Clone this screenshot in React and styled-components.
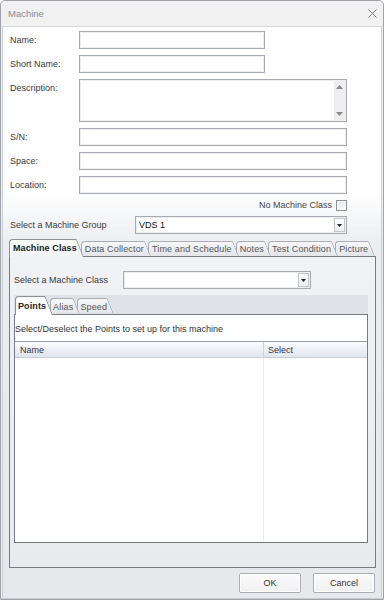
import React from 'react';
import styled, { createGlobalStyle } from 'styled-components';

const Global = createGlobalStyle`
  html, body { margin: 0; padding: 0; background: #fff; }
  * { box-sizing: border-box; }
`;

const FONT = '"Liberation Sans", Arial, sans-serif';

const Window = styled.div`
  width: 384px;
  height: 600px;
  border: 1px solid #9ea2a8;
  border-radius: 5px 5px 0 0;
  display: flex;
  flex-direction: column;
  overflow: hidden;
  background: #f1f1f1;
  font-family: ${FONT};
  font-size: 9px;
  color: #333;
`;

const TitleBar = styled.div`
  height: 25px;
  flex: none;
  display: flex;
  align-items: center;
  justify-content: space-between;
  padding: 0 6px 0 7px;
  color: #8c8c8c;
  font-size: 9.5px;
`;

const Body = styled.div`
  flex: 1;
  display: flex;
  flex-direction: column;
  margin: 0 1px;
  border: 1px solid #c9ccd1;
  border-top-color: #d6d8db;
  padding: 4px 5px 5px 6px;
  background: linear-gradient(to bottom, #ffffff 0px, #ffffff 165px, #eceef1 215px, #e6e8ec 100%);
`;

const FormGrid = styled.div`
  display: grid;
  grid-template-columns: 70px 1fr;
  row-gap: 6px;
`;

const Label = styled.div`
  display: flex;
  align-items: ${p => (p.$top ? 'flex-start' : 'center')};
  padding-top: ${p => (p.$top ? 4 : 0)}px;
  padding-left: 1px;
  color: #3a3a3a;
  white-space: nowrap;
`;

const Field = styled.div`
  width: ${p => p.$w}px;
  height: ${p => p.$h || 18}px;
  border: 1px solid #a7aab0;
  box-shadow: inset 0 0 0 1px #eceef1;
  background: #fff;
  display: flex;
  align-items: center;
  justify-content: space-between;
  padding-left: 3px;
  color: #111;
`;

const TextArea = styled(Field)`
  align-items: stretch;
  padding: 1px;
`;

const ScrollBar = styled.div`
  width: 11px;
  background: #eeeeee;
  display: flex;
  flex-direction: column;
  justify-content: space-between;
  align-items: center;
  padding: 4px 0;
`;

const RightRow = styled.div`
  grid-column: 2;
  width: 268px;
  height: 10px;
  display: flex;
  justify-content: flex-end;
  align-items: center;
  gap: 4px;
  color: #444;
`;

const CheckBox = styled.div`
  width: 11px;
  height: 11px;
  border: 1px solid #8e9196;
  background: linear-gradient(#e9eaec, #f9f9fa);
  box-shadow: inset 0 0 0 1px #fafafa;
`;

const SelectRow = styled.div`
  display: flex;
  align-items: center;
  margin-top: ${p => p.$mt || 0}px;
`;

const SelectLabel = styled.div`
  width: ${p => p.$w}px;
  padding-left: ${p => p.$pl || 0}px;
  color: #3a3a3a;
  white-space: nowrap;
`;

const DropBtn = styled.div`
  width: 11px;
  height: 14px;
  margin-right: 1px;
  border: 1px solid #c3c6cb;
  background: linear-gradient(#fdfdfd, #eceef0);
  display: flex;
  align-items: center;
  justify-content: center;
`;

const TabStrip = styled.div`
  display: flex;
  align-items: flex-end;
  height: ${p => p.$h}px;
  margin-top: ${p => p.$mt || 0}px;
  margin-bottom: -1px;
  padding-left: ${p => p.$pl || 0}px;
  position: relative;
  z-index: 2;
  flex: none;
  background: ${p => (p.$bg ? `linear-gradient(${p.$bg}, ${p.$bg})` : 'none')};
  background-size: 100% calc(100% - 1px);
  background-repeat: no-repeat;
`;

const Tab = styled.div`
  position: relative;
  z-index: ${p => (p.$active ? 50 : p.$z)};
  display: flex;
  align-items: center;
  height: ${p => (p.$active ? p.$h : p.$h - 3)}px;
  margin-bottom: ${p => (p.$active ? 0 : 1)}px;
  margin-right: -3px;
  padding: ${p => (p.$active ? 0 : 1)}px ${p => p.$pr}px 0 ${p => p.$pl}px;
  white-space: nowrap;
  font-weight: ${p => (p.$active ? 700 : 400)};
  color: ${p => (p.$active ? '#222' : '#555')};
  letter-spacing: ${p => (p.$active ? '0.1px' : '0.15px')};

  &::before,
  &::after {
    content: '';
    position: absolute;
    top: 0;
    bottom: 0;
    z-index: -1;
    border-style: solid;
    border-color: ${p => (p.$active ? '#8a8f96' : '#a9adb4')};
    background: ${p =>
      p.$active
        ? `linear-gradient(#fdfdfd, ${p.$base})`
        : 'linear-gradient(#f7f7f8, #e3e5e9)'};
  }
  &::before {
    left: 0;
    right: 8px;
    border-width: 1px 0 0 1px;
    border-radius: 4px 0 0 0;
  }
  &::after {
    right: 0;
    width: 14px;
    border-width: 1px 1px 0 0;
    border-radius: 0 2px 0 0;
    transform: skewX(22deg);
    transform-origin: 100% 100%;
  }
`;

const Panel = styled.div`
  flex: 1;
  display: flex;
  flex-direction: column;
  border: 1px solid #767b83;
  background: linear-gradient(#f1f2f5, #e8eaee);
  padding: 14px 7px 24px 4px;
  position: relative;
  z-index: 1;
`;

const InnerPanel = styled.div`
  flex: 1;
  display: flex;
  flex-direction: column;
  border: 1px solid #767b83;
  background: #fff;
  position: relative;
  z-index: 1;
`;

const Hint = styled.div`
  height: 26px;
  display: flex;
  align-items: center;
  padding-top: 1px;
  color: #333;
  white-space: nowrap;
`;

const GridHeader = styled.div`
  display: grid;
  grid-template-columns: 248px 1fr;
  height: 17px;
  border-top: 1px solid #9a9ea5;
  border-bottom: 1px solid #c9ced6;
  background: linear-gradient(#fbfcfd, #dfe5ee);
  color: #33334a;
`;

const HeadCell = styled.div`
  display: flex;
  align-items: center;
  padding-left: ${p => p.$pl}px;
  border-left: ${p => (p.$divider ? '1px solid #cfd3da' : 'none')};
`;

const GridBody = styled.div`
  flex: 1;
  display: grid;
  grid-template-columns: 248px 1fr;
`;

const BodyCell = styled.div`
  border-left: ${p => (p.$divider ? '1px solid #ececec' : 'none')};
`;

const ButtonRow = styled.div`
  display: flex;
  justify-content: flex-end;
  gap: 12px;
  margin-top: 5px;
  padding-right: 1px;
  flex: none;
`;

const Button = styled.div`
  width: 62px;
  height: 20px;
  border: 1px solid #abadb2;
  border-radius: 2px;
  background: linear-gradient(#fbfbfb, #f0f0f1);
  box-shadow: inset 0 0 0 1px #ffffff;
  display: flex;
  align-items: center;
  justify-content: center;
  color: #333;
`;

const Arrow = ({ dir = 'down', color = '#222', w = 5, h = 3 }) => (
  <svg width={w} height={h} viewBox={`0 0 ${w} ${h}`}>
    {dir === 'down' ? (
      <polygon points={`0,0 ${w},0 ${w / 2},${h}`} fill={color} />
    ) : (
      <polygon points={`0,${h} ${w},${h} ${w / 2},0`} fill={color} />
    )}
  </svg>
);

const CloseIcon = () => (
  <svg width="9" height="9" viewBox="0 0 9 9">
    <path d="M0.5 0.5 L8.5 8.5 M8.5 0.5 L0.5 8.5" stroke="#7a7a7a" strokeWidth="1" />
  </svg>
);

const outerTabs = ['Machine Class', 'Data Collector', 'Time and Schedule', 'Notes', 'Test Condition', 'Picture'];
const innerTabs = ['Points', 'Alias', 'Speed'];

export default function App() {
  return (
    <>
      <Global />
      <Window>
        <TitleBar>
          <span>Machine</span>
          <CloseIcon />
        </TitleBar>
        <Body>
          <FormGrid>
            <Label>Name:</Label>
            <Field $w={186} />
            <Label>Short Name:</Label>
            <Field $w={186} />
            <Label $top>Description:</Label>
            <TextArea $w={268} $h={43}>
              <span />
              <ScrollBar>
                <Arrow dir="up" color="#8a8a8a" w={7} h={4} />
                <Arrow dir="down" color="#8a8a8a" w={7} h={4} />
              </ScrollBar>
            </TextArea>
            <Label>S/N:</Label>
            <Field $w={268} />
            <Label>Space:</Label>
            <Field $w={268} />
            <Label>Location:</Label>
            <Field $w={268} />
            <RightRow>
              <span>No Machine Class</span>
              <CheckBox />
            </RightRow>
          </FormGrid>
          <SelectRow $mt={6}>
            <SelectLabel $w={126} $pl={1}>Select a Machine Group</SelectLabel>
            <Field $w={212}>
              <span>VDS 1</span>
              <DropBtn>
                <Arrow />
              </DropBtn>
            </Field>
          </SelectRow>

          <TabStrip $h={18} $mt={5}>
            {outerTabs.map((t, i) => (
              <Tab
                key={t}
                $active={i === 0}
                $z={outerTabs.length - i}
                $h={18}
                $pl={4}
                $pr={7}
                $base="#f1f2f5"
              >
                {t}
              </Tab>
            ))}
          </TabStrip>
          <Panel>
            <SelectRow>
              <SelectLabel $w={109}>Select a Machine Class</SelectLabel>
              <Field $w={188}>
                <span />
                <DropBtn>
                  <Arrow />
                </DropBtn>
              </Field>
            </SelectRow>
            <TabStrip $h={20} $mt={6} $pl={1} $bg="#dfe2e7">
              {innerTabs.map((t, i) => (
                <Tab
                  key={t}
                  $active={i === 0}
                  $z={innerTabs.length - i}
                  $h={19}
                  $pl={3}
                  $pr={7}
                  $base="#ffffff"
                >
                  {t}
                </Tab>
              ))}
            </TabStrip>
            <InnerPanel>
              <Hint>Select/Deselect the Points to set up for this machine</Hint>
              <GridHeader>
                <HeadCell $pl={5}>Name</HeadCell>
                <HeadCell $pl={4} $divider>Select</HeadCell>
              </GridHeader>
              <GridBody>
                <BodyCell />
                <BodyCell $divider />
              </GridBody>
            </InnerPanel>
          </Panel>
          <ButtonRow>
            <Button>OK</Button>
            <Button>Cancel</Button>
          </ButtonRow>
        </Body>
      </Window>
    </>
  );
}
